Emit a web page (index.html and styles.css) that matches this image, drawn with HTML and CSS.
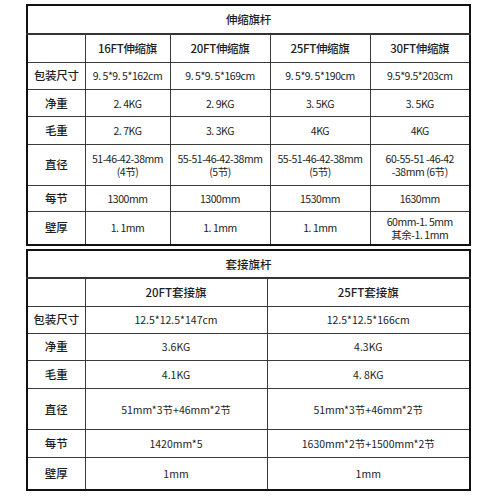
FILE: index.html
```html
<!DOCTYPE html>
<html lang="zh">
<head>
<meta charset="utf-8">
<link rel="stylesheet" href="styles.css">
</head>
<body>
<div class="page">
<table class="spec spec-a">
  <colgroup>
    <col class="c-label"><col class="c-a1"><col class="c-a"><col class="c-a"><col class="c-a">
  </colgroup>
  <tr class="h28"><td class="title" colspan="5">伸缩旗杆</td></tr>
  <tr class="h29"><td></td><td>16FT伸缩旗</td><td>20FT伸缩旗</td><td>25FT伸缩旗</td><td>30FT伸缩旗</td></tr>
  <tr class="h27"><td class="lbl">包装尺寸</td><td class="num">9. 5*9. 5*162cm</td><td class="num">9. 5*9. 5*169cm</td><td class="num">9. 5*9. 5*190cm</td><td class="num">9.5*9.5*203cm</td></tr>
  <tr class="h28"><td class="lbl">净重</td><td class="num">2. 4KG</td><td class="num">2. 9KG</td><td class="num">3. 5KG</td><td class="num">3. 5KG</td></tr>
  <tr class="h28"><td class="lbl">毛重</td><td class="num">2. 7KG</td><td class="num">3. 3KG</td><td class="num">4KG</td><td class="num">4KG</td></tr>
  <tr class="h41"><td class="lbl">直径</td><td class="num">51-46-42-38mm<br>(4节)</td><td class="num">55-51-46-42-38mm<br>(5节)</td><td class="num">55-51-46-42-38mm<br>(5节)</td><td class="num">60-55-51 -46-42<br>-38mm (6节)</td></tr>
  <tr class="h27"><td class="lbl">每节</td><td class="num">1300mm</td><td class="num">1300mm</td><td class="num">1530mm</td><td class="num">1630mm</td></tr>
  <tr class="h33"><td class="lbl">壁厚</td><td class="num">1. 1mm</td><td class="num">1. 1mm</td><td class="num">1. 1mm</td><td class="num">60mm-1. 5mm<br>其余-1. 1mm</td></tr>
</table>

<table class="spec spec-b">
  <colgroup>
    <col class="c-label"><col class="c-b1"><col class="c-b2">
  </colgroup>
  <tr class="h28"><td class="title" colspan="3">套接旗杆</td></tr>
  <tr class="h28"><td></td><td>20FT套接旗</td><td>25FT套接旗</td></tr>
  <tr class="h27"><td class="lbl">包装尺寸</td><td class="num">12.5*12.5*147cm</td><td class="num">12.5*12.5*166cm</td></tr>
  <tr class="h28"><td class="lbl">净重</td><td class="num">3.6KG</td><td class="num">4.3KG</td></tr>
  <tr class="h28"><td class="lbl">毛重</td><td class="num">4.1KG</td><td class="num">4. 8KG</td></tr>
  <tr class="h42"><td class="lbl">直径</td><td class="num">51mm*3节+46mm*2节</td><td class="num">51mm*3节+46mm*2节</td></tr>
  <tr class="h28"><td class="lbl">每节</td><td class="num">1420mm*5</td><td class="num">1630mm*2节+1500mm*2节</td></tr>
  <tr class="h32"><td class="lbl">壁厚</td><td class="num">1mm</td><td class="num">1mm</td></tr>
</table>
</div>
</body>
</html>
```

FILE: styles.css
```css
html, body {
  margin: 0;
  padding: 0;
  background: #fff;
}

.page {
  padding: 4px 0 0 26px;
  display: flex;
  flex-direction: column;
  gap: 3px;
  font-family: "Noto Sans CJK SC", "Noto Sans", sans-serif;
  color: #1e1e1e;
}

.spec {
  border-collapse: collapse;
  table-layout: fixed;
  border: 2px solid #111;
}

.spec-a { width: 444px; }
.spec-b { width: 443px; }

.c-label { width: 58px; }
.c-a1 { width: 85px; }
.c-a { width: 100px; }
.c-b1 { width: 182px; }
.c-b2 { width: 203px; }

.spec td {
  border: 1px solid #3a3a3a;
  padding: 0;
  text-align: center;
  vertical-align: middle;
  font-size: 11.5px;
  line-height: 13px;
  font-weight: 500;
  white-space: nowrap;
  overflow: hidden;
}

.spec td.title {
  border-bottom: 2px solid #333;
}

.spec td.num {
  font-size: 10.5px;
  font-weight: 400;
}

.spec-a td.num {
  letter-spacing: -0.45px;
}

.spec-a td {
  letter-spacing: -0.3px;
}

.h27 td { height: 25.6px; }
.h28 td { height: 26.6px; }
.h29 td { height: 27.6px; }
.h32 td { height: 30.6px; }
.h33 td { height: 31.6px; }
.h41 td { height: 39.6px; }
.h42 td { height: 40.6px; }
```
